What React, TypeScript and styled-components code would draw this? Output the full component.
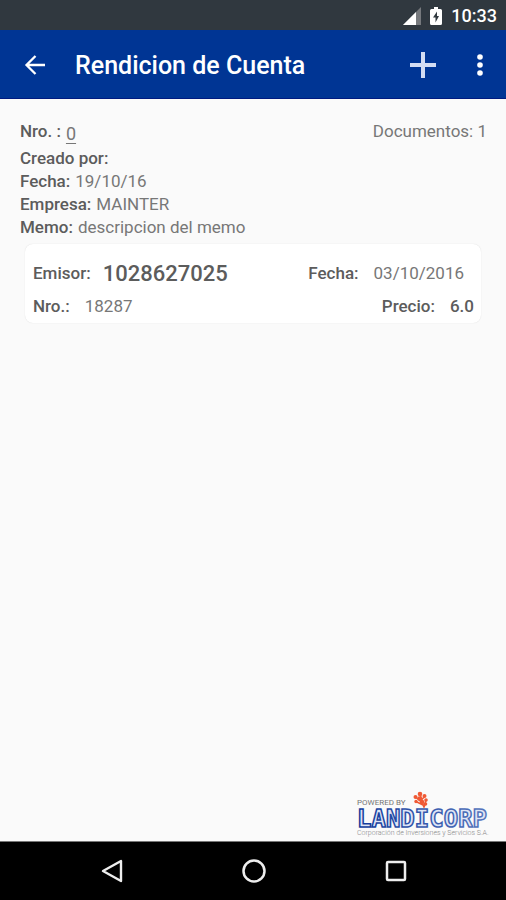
import React from "react";
import styled, { createGlobalStyle } from "styled-components";

const GlobalStyle = createGlobalStyle`
  *, *::before, *::after { box-sizing: border-box; }
  body {
    margin: 0;
    background: #fafafa;
    color: #5c5c5c;
    font-family: Roboto, "Liberation Sans", sans-serif;
  }
`;

const Screen = styled.div`
  display: flex;
  flex-direction: column;
  min-height: 100vh;
`;

const StatusBar = styled.div`
  display: flex;
  align-items: center;
  justify-content: flex-end;
  gap: 9px;
  height: 30px;
  padding: 2px 9px 0;
  background: #30383f;
  color: #fff;
  font-size: 18px;
  line-height: 28px;
  font-weight: 500;

  svg { display: block; }
`;

const StatusIcons = styled.div`
  display: flex;
  gap: 9px;
`;

const AppBar = styled.header`
  display: flex;
  align-items: center;
  height: 69px;
  padding: 2px 0 0 20px;
  background: #003594;
  border-bottom: 1px solid #001a80;
  color: #fff;
`;

const Title = styled.h1`
  flex: 1;
  margin: 0 0 0 25px;
  padding-top: 2px;
  font-size: 25px;
  line-height: 32px;
  font-weight: 500;
`;

const IconButton = styled.button<{ $width: number }>`
  display: flex;
  align-items: center;
  justify-content: center;
  width: ${(p) => p.$width}px;
  height: 48px;
  padding: 0;
  border: 0;
  background: none;
  color: inherit;
  cursor: pointer;
`;

const Content = styled.main`
  flex: 1;
  display: flex;
  flex-direction: column;
  padding: 21px 19px 3px 20px;
`;

const Summary = styled.div`
  display: flex;
  justify-content: space-between;
  font-size: 17px;
  line-height: 23px;
`;

const Details = styled.dl`
  margin: 0;
`;

const Detail = styled.div<{ $tall?: boolean }>`
  display: flex;
  gap: 5px;
  height: ${(p) => (p.$tall ? 27 : 23)}px;
`;

const Label = styled.dt`
  font-weight: 500;
`;

const Value = styled.dd<{ $strong?: boolean }>`
  margin: 0;
  color: ${(p) => (p.$strong ? "inherit" : "#777")};
  font-weight: ${(p) => (p.$strong ? 500 : 400)};
`;

const NumberLink = styled.a`
  color: inherit;
  font-size: 18px;
  line-height: 27px;
  text-underline-offset: 3px;
  text-decoration-thickness: 1px;
`;

const DocumentCount = styled.span`
  color: #777;
`;

const Card = styled.article`
  display: flex;
  flex-direction: column;
  gap: 6px;
  margin: 5px 6px 0 5px;
  padding: 16px 7px 3px 8px;
  border-radius: 8px;
  background: #fff;
  box-shadow: 0 0 1px #d4d4d4;
  font-size: 17px;
  line-height: 27px;
`;

const CardRow = styled.dl<{ $inset?: boolean }>`
  display: flex;
  justify-content: space-between;
  margin: 0;
  padding-right: ${(p) => (p.$inset ? 10 : 0)}px;
`;

const Field = styled.div<{ $large?: boolean }>`
  display: flex;
  gap: ${(p) => (p.$large ? 12 : 15)}px;

  dd { font-size: ${(p) => (p.$large ? 22 : 17)}px; }
`;

const Brand = styled.footer`
  display: flex;
  flex-direction: column;
  align-self: flex-end;
  width: 130px;
  margin-top: auto;
  color: #777;
`;

const PoweredBy = styled.div`
  display: flex;
  align-items: flex-end;
  gap: 8px;
  font-size: 8px;
  line-height: 12px;

  svg { display: block; }
`;

const Wordmark = styled.svg`
  display: block;
  width: 130px;
  height: 20px;
  overflow: visible;
  font-family: "DejaVu Sans Mono", monospace;
  font-size: 24px;
  font-weight: 700;
`;

const Tagline = styled.div`
  color: #888;
  font-size: 7px;
  font-weight: 300;
  line-height: 9px;
  white-space: nowrap;
`;

const NavBar = styled.nav`
  display: flex;
  align-items: center;
  justify-content: space-between;
  height: 59px;
  padding: 0 86px 0 88px;
  border-top: 1px solid #777;
  background: #000;
  color: #eee;
`;

export default function App() {
  return (
    <>
      <GlobalStyle />
      <Screen>
        <StatusBar>
          <StatusIcons>
            <svg width="18" height="18" viewBox="0 0 18 18" aria-hidden="true">
              <path d="M18 0V18H0Z" fill="#76797d" />
              <path d="M13 5V18H0Z" fill="#fff" />
            </svg>
            <svg width="12" height="18" viewBox="0 0 12 18" aria-hidden="true">
              <path d="M4 0h4v2h2.5a1.5 1.5 0 0 1 1.500 1.500v13a1.500 1.500 0 0 1-1.500 1.500h-9A1.500 1.500 0 0 1 0 16.500v-13A1.500 1.500 0 0 1 1.500 2H4Z" fill="#fff" />
              <path d="M7 4.500 3 10.500h2.500v5L9 9H7Z" fill="#30383f" />
            </svg>
          </StatusIcons>
          <time>10:33</time>
        </StatusBar>

        <AppBar>
          <IconButton $width={30} aria-label="Volver">
            <svg width="22" height="20" viewBox="0 0 22 20" fill="none" stroke="currentColor" strokeWidth="2.300">
              <path d="M21 10H2.500M11.500 1 2.500 10l9 9" />
            </svg>
          </IconButton>
          <Title>Rendicion de Cuenta</Title>
          <IconButton $width={60} aria-label="Agregar">
            <svg width="26" height="26" viewBox="0 0 26 26" stroke="#d3ddf3" strokeWidth="4">
              <path d="M13 0v26M0 13h26" />
            </svg>
          </IconButton>
          <IconButton $width={53} aria-label="Más opciones">
            <svg width="6" height="22" viewBox="0 0 6 22" fill="currentColor">
              <circle cx="3" cy="3" r="2.800" />
              <circle cx="3" cy="11" r="2.800" />
              <circle cx="3" cy="19" r="2.800" />
            </svg>
          </IconButton>
        </AppBar>

        <Content>
          <Summary>
            <Details>
              <Detail $tall>
                <Label>Nro. :</Label>
                <Value><NumberLink href="#0">0</NumberLink></Value>
              </Detail>
              <Detail><Label>Creado por:</Label></Detail>
              <Detail><Label>Fecha:</Label><Value>19/10/16</Value></Detail>
              <Detail><Label>Empresa:</Label><Value>MAINTER</Value></Detail>
              <Detail><Label>Memo:</Label><Value>descripcion del memo</Value></Detail>
            </Details>
            <DocumentCount>Documentos: 1</DocumentCount>
          </Summary>

          <Card>
            <CardRow $inset>
              <Field $large><Label>Emisor:</Label><Value $strong>1028627025</Value></Field>
              <Field><Label>Fecha:</Label><Value>03/10/2016</Value></Field>
            </CardRow>
            <CardRow>
              <Field><Label>Nro.:</Label><Value>18287</Value></Field>
              <Field><Label>Precio:</Label><Value $strong>6.0</Value></Field>
            </CardRow>
          </Card>

          <Brand>
            <PoweredBy>
              <span>POWERED BY</span>
              <svg width="16" height="18" viewBox="0 0 16 17" fill="#f05a35" aria-hidden="true">
                <circle cx="7" cy="2.500" r="2.300" />
                <circle cx="2.500" cy="5.500" r="2" />
                <circle cx="11.500" cy="4.500" r="2" />
                <circle cx="6.500" cy="7" r="2.300" />
                <circle cx="13" cy="8.500" r="1.800" />
                <circle cx="3" cy="10" r="1.700" />
                <circle cx="9" cy="10.500" r="2.300" />
                <circle cx="12.500" cy="12.500" r="1.800" />
                <path d="M7 2.500 11 16M2.500 5.500 9 11M12 4.500 8 9M3 10l8 4M13 8.500 11 16" stroke="#f05a35" strokeWidth="1.600" fill="none" />
              </svg>
            </PoweredBy>
            <Wordmark viewBox="0 0 130 20">
              <defs>
                <linearGradient id="ink" gradientUnits="userSpaceOnUse" x1="0" y1="0" x2="130" y2="0">
                  <stop offset="0" stopColor="#12399b" />
                  <stop offset="1" stopColor="#5575bd" />
                </linearGradient>
              </defs>
              <text x="0" y="18" fill="#dfe6f6" stroke="url(#ink)" strokeWidth="1.500">LANDICORP</text>
            </Wordmark>
            <Tagline>Corporación de Inversiones y Servicios S.A.</Tagline>
          </Brand>
        </Content>

        <NavBar>
          <IconButton $width={48} aria-label="Atrás">
            <svg width="22" height="24" viewBox="0 0 22 24" fill="none" stroke="currentColor" strokeWidth="2.400" strokeLinejoin="round">
              <path d="M20 2v20L2 12Z" />
            </svg>
          </IconButton>
          <IconButton $width={48} aria-label="Inicio">
            <svg width="24" height="24" viewBox="0 0 24 24" fill="none" stroke="currentColor" strokeWidth="2.500">
              <circle cx="12" cy="12" r="10.500" />
            </svg>
          </IconButton>
          <IconButton $width={48} aria-label="Recientes">
            <svg width="22" height="22" viewBox="0 0 22 22" fill="none" stroke="currentColor" strokeWidth="2.500">
              <rect x="2" y="2" width="18" height="18" rx="1" />
            </svg>
          </IconButton>
        </NavBar>
      </Screen>
    </>
  );
}
